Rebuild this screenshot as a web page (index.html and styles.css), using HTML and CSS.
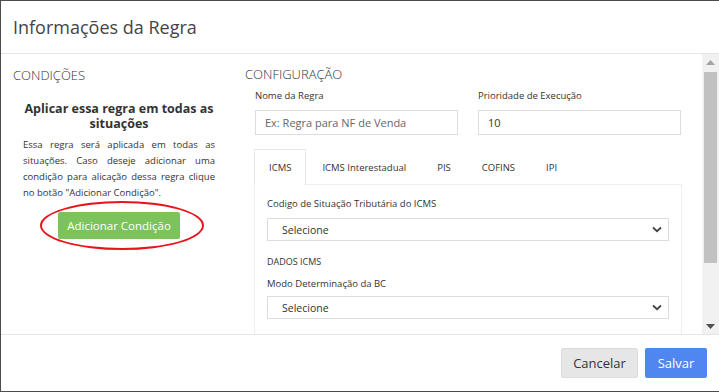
FILE: index.html
```html
<!DOCTYPE html>
<html lang="pt-BR">
<head>
  <meta charset="UTF-8"/>
  <title>Informações da Regra</title>
  <link rel="stylesheet" href="styles.css">
</head>
<body>
  <div class="modal">
    <div class="modal-header">
      <h4 class="modal-title">Informações da Regra</h4>
    </div>

    <div class="modal-body">
      <div class="body-content">
        <div class="col-left">
          <h5 class="section-title">CONDIÇÕES</h5>
          <h4 class="cond-title">Aplicar essa regra em todas as situações</h4>
          <p class="cond-text">Essa regra será aplicada em todas as situações. Caso deseje adicionar uma condição para alicação dessa regra clique no botão "Adicionar Condição".</p>
          <div class="cond-action">
            <button class="btn btn-green">Adicionar Condição</button>
            <span class="highlight-ring"></span>
          </div>
        </div>

        <div class="col-right">
          <h5 class="section-title">CONFIGURAÇÃO</h5>
          <div class="form-row">
            <div class="form-group">
              <label>Nome da Regra</label>
              <input type="text" class="form-control" placeholder="Ex: Regra para NF de Venda">
            </div>
            <div class="form-group">
              <label>Prioridade de Execução</label>
              <input type="text" class="form-control" value="10">
            </div>
          </div>

          <ul class="tabs">
            <li class="tab active">ICMS</li>
            <li class="tab">ICMS Interestadual</li>
            <li class="tab">PIS</li>
            <li class="tab">COFINS</li>
            <li class="tab">IPI</li>
          </ul>
          <div class="tab-panel">
            <label>Codigo de Situação Tributária do ICMS</label>
            <div class="select">
              <span>Selecione</span>
              <svg width="10" height="7" viewBox="0 0 10 7"><path d="M1 1.5 L5 5.2 L9 1.5" fill="none" stroke="#444" stroke-width="1.8"/></svg>
            </div>
            <div class="group-title">DADOS ICMS</div>
            <label class="tight">Modo Determinação da BC</label>
            <div class="select">
              <span>Selecione</span>
              <svg width="10" height="7" viewBox="0 0 10 7"><path d="M1 1.5 L5 5.2 L9 1.5" fill="none" stroke="#444" stroke-width="1.8"/></svg>
            </div>
          </div>
        </div>
      </div>

      <div class="scrollbar">
        <svg class="arrow" width="9" height="5" viewBox="0 0 9 5"><path d="M0 5 L4.5 0 L9 5 Z" fill="#a3a3a3"/></svg>
        <div class="thumb"></div>
        <div class="track-gap"></div>
        <svg class="arrow" width="9" height="5" viewBox="0 0 9 5"><path d="M0 0 L4.5 5 L9 0 Z" fill="#505050"/></svg>
      </div>
    </div>

    <div class="modal-footer">
      <button class="btn btn-default">Cancelar</button>
      <button class="btn btn-primary">Salvar</button>
    </div>
  </div>
</body>
</html>
```

FILE: styles.css
```css
* {
  box-sizing: border-box;
}
body {
  margin: 0;
  background: #4e4a48;
  font-family: "Open Sans", Arial, sans-serif;
  color: #333;
}
.modal {
  margin: 1px 0 0 1px;
  height: 390px;
  background: #fff;
  display: flex;
  flex-direction: column;
}
.modal-header {
  height: 53px;
  border-bottom: 1px solid #e5e5e5;
  padding: 0 12px;
  display: flex;
  align-items: center;
}
.modal-title {
  margin: 0;
  font-size: 18px;
  font-weight: normal;
  color: #444;
}
.modal-body {
  height: 281px;
  display: flex;
  border-bottom: 1px solid #e5e5e5;
}
.body-content {
  flex: 1;
  display: flex;
  overflow: hidden;
}
.section-title {
  margin: 0;
  font-size: 13px;
  font-weight: 300;
  color: #333;
  line-height: 18px;
}
.col-left {
  width: 235px;
  padding: 12px 11px 0 12px;
}
.cond-title {
  margin: 17px 0 0;
  text-align: center;
  font-size: 12.5px;
  font-weight: bold;
  line-height: 15px;
  color: #333;
  padding: 0 10px;
}
.cond-text {
  margin: 6px 0 0;
  padding: 0 10px;
  font-size: 9.5px;
  line-height: 16px;
  text-align: justify;
  color: #333;
}
.cond-action {
  position: relative;
  display: flex;
  justify-content: center;
  margin-top: 11px;
}
.btn {
  font-family: "Open Sans", Arial, sans-serif;
  border: 1px solid transparent;
  border-radius: 2px;
  cursor: pointer;
}
.btn-green {
  background: #7cc35c;
  color: #fff;
  font-size: 11.5px;
  height: 27px;
  width: 122px;
  padding: 0;
}
.highlight-ring {
  position: absolute;
  left: 27px;
  top: -11px;
  width: 164px;
  height: 49px;
  border: 2.5px solid #e8141c;
  border-radius: 50%;
}
.col-right {
  flex: 1;
  padding: 11px 21px 0 9px;
}
.form-row {
  display: flex;
  gap: 20px;
  padding-left: 10px;
  margin-top: 6px;
}
.form-group {
  flex: 1;
}
label {
  display: block;
  font-size: 9.5px;
  line-height: 14px;
  color: #333;
}
.form-control {
  display: block;
  width: 100%;
  height: 25px;
  margin-top: 7px;
  border: 1px solid #ddd;
  padding: 0 9px;
  font-family: "Open Sans", Arial, sans-serif;
  font-size: 11px;
  color: #333;
}
.form-control::placeholder {
  color: #666;
}
.tabs {
  list-style: none;
  margin: 14px 0 0 9px;
  padding: 0;
  display: flex;
}
.tab {
  height: 35px;
  padding: 0 14px;
  margin-right: 1px;
  display: flex;
  align-items: center;
  font-size: 9.5px;
  color: #333;
  border: 1px solid transparent;
  border-bottom: none;
}
.tab.active {
  border-color: #e8e8e8;
  background: #fff;
  position: relative;
  margin-bottom: -1px;
  height: 36px;
}
.tab-panel {
  margin-left: 9px;
  margin-right: -1px;
  border: 1px solid #eee;
  padding: 10px 12px 20px;
}
.tab-panel label {
  margin: 2px 0 7px;
}
.tab-panel label.tight {
  margin-bottom: 5px;
}
.select {
  height: 23px;
  border: 1px solid #ddd;
  display: flex;
  align-items: center;
  justify-content: space-between;
  padding: 0 6px 0 14px;
  font-size: 10.5px;
  color: #333;
}
.group-title {
  font-size: 9px;
  margin-top: 14px;
  line-height: 14px;
  color: #333;
}
.tab-panel .group-title + label {
  margin-top: 8px;
}
.scrollbar {
  width: 17px;
  background: #f1f1f1;
  display: flex;
  flex-direction: column;
  align-items: center;
  padding: 6px 0 5px;
}
.arrow {
  flex: none;
}
.thumb {
  width: 13px;
  height: 191px;
  background: #c1c1c1;
  margin-top: 7px;
}
.track-gap {
  flex: 1;
}
.modal-footer {
  flex: 1;
  display: flex;
  justify-content: flex-end;
  align-items: flex-start;
  gap: 7px;
  padding: 13px 12px 0 0;
}
.modal-footer .btn {
  height: 30px;
  font-size: 13px;
}
.btn-default {
  width: 77px;
  background: #e6e6e6;
  border-color: #dcdcdc;
  color: #333;
}
.btn-primary {
  width: 62px;
  background: #4f86ef;
  color: #fff;
}
```
